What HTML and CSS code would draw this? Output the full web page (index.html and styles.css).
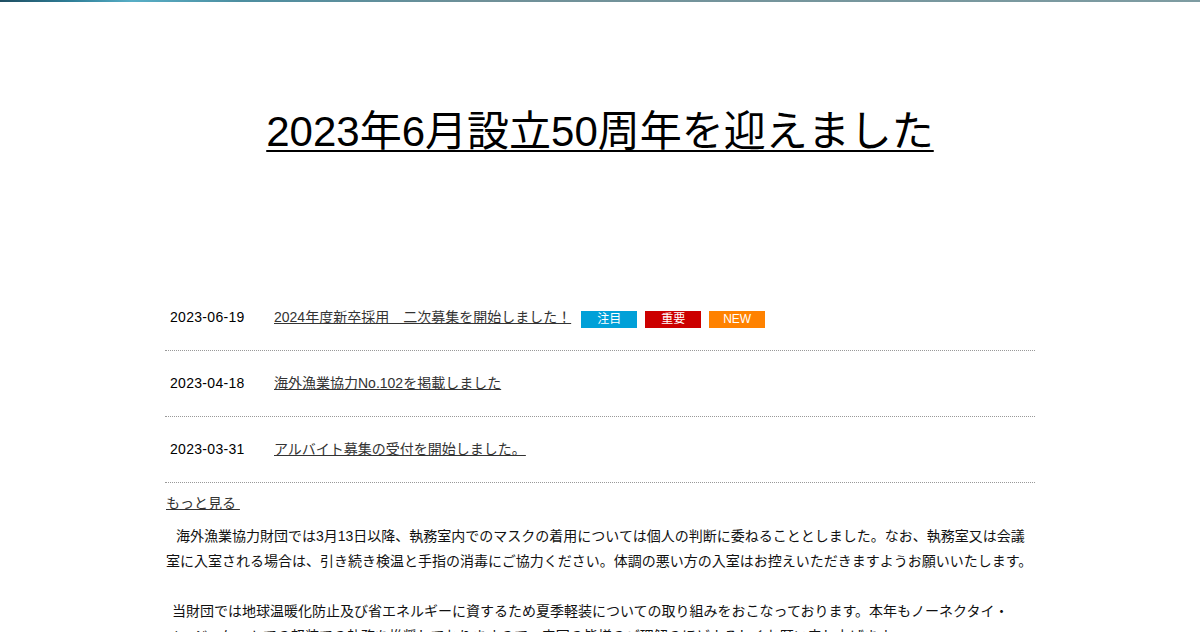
FILE: index.html
```html
<!DOCTYPE html>
<html lang="ja">
<head>
<meta charset="utf-8">
<title>海外漁業協力財団</title>
<link rel="stylesheet" href="styles.css">
</head>
<body>
<div class="topbar"></div>
<header class="hero">
  <h1 class="hero-title"><a href="#">2023年6月設立50周年を迎えました</a></h1>
</header>
<main class="content">
  <ul class="news">
    <li class="news-item">
      <span class="news-date">2023-06-19</span>
      <a class="news-link" href="#">2024年度新卒採用　二次募集を開始しました！</a>
      <span class="badges">
        <span class="badge badge-blue">注目</span>
        <span class="badge badge-red">重要</span>
        <span class="badge badge-orange">NEW</span>
      </span>
    </li>
    <li class="news-item">
      <span class="news-date">2023-04-18</span>
      <a class="news-link" href="#">海外漁業協力No.102を掲載しました</a>
    </li>
    <li class="news-item">
      <span class="news-date">2023-03-31</span>
      <a class="news-link" href="#">アルバイト募集の受付を開始しました。</a>
    </li>
  </ul>
  <div class="more"><a class="more-link" href="#">もっと見る&nbsp;</a></div>
  <p class="notice notice-first">海外漁業協力財団では3月13日以降、執務室内でのマスクの着用については個人の判断に委ねることとしました。なお、執務室又は会議室に入室される場合は、引き続き検温と手指の消毒にご協力ください。体調の悪い方の入室はお控えいただきますようお願いいたします。</p>
  <p class="notice notice-second">当財団では地球温暖化防止及び省エネルギーに資するため夏季軽装についての取り組みをおこなっております。本年もノーネクタイ・<span class="nowrap">ノージャケット</span>での軽装での執務を推奨しておりますので、来団の皆様のご理解のほどよろしくお願い申し上げます。</p>
</main>
</body>
</html>
```

FILE: styles.css
```css
html, body {
  margin: 0;
  padding: 0;
  background: #ffffff;
}
body {
  font-family: "Liberation Sans", Arial, "Noto Sans CJK JP", sans-serif;
  color: #111;
  font-size: 14px;
  line-height: 25px;
}
.topbar {
  height: 2px;
  background: linear-gradient(90deg, #1f4e62 0%, #2f7f98 6%, #57aec6 11%, #4d8ea0 20%, #6f9098 40%, #7e9ca2 100%);
}
.hero {
  padding-top: 105px;
  text-align: center;
}
.hero-title {
  margin: 0;
  font-size: 42px;
  line-height: 50px;
  font-weight: normal;
}
.hero-title a {
  color: #000;
  text-decoration: underline;
  text-decoration-thickness: 2px;
  text-underline-offset: 4px;
}
.content {
  width: 870px;
  margin: 128px auto 0;
}
.news {
  list-style: none;
  margin: 0;
  padding: 0;
}
.news-item {
  display: flex;
  align-items: center;
  height: 65px;
  border-bottom: 1px dotted #999;
  padding-left: 5px;
}
.news-date {
  width: 104px;
  color: #000;
  letter-spacing: 0.3px;
  flex-shrink: 0;
}
.news-link {
  color: #333;
  text-decoration: underline;
}
.badges {
  display: flex;
  gap: 8px;
  margin-left: 10px;
  padding-top: 3px;
}
.badge {
  display: flex;
  align-items: center;
  justify-content: center;
  width: 56px;
  height: 17px;
  font-size: 12px;
  line-height: 17px;
  color: #fff;
}
.badge-blue { background: #00a0d8; }
.badge-red { background: #cc0000; }
.badge-orange { background: #ff8200; }
.more {
  margin-top: 8px;
  padding-left: 1px;
}
.more-link {
  color: #333;
  text-decoration: underline;
}
.notice {
  margin: 8px 0 0;
  padding-left: 1px;
  color: #111;
}
.notice-first {
  text-indent: 10px;
  margin-bottom: 25px;
}
.notice-second {
  margin-top: 0;
  text-indent: 6px;
}
.nowrap {
  white-space: nowrap;
}
```
